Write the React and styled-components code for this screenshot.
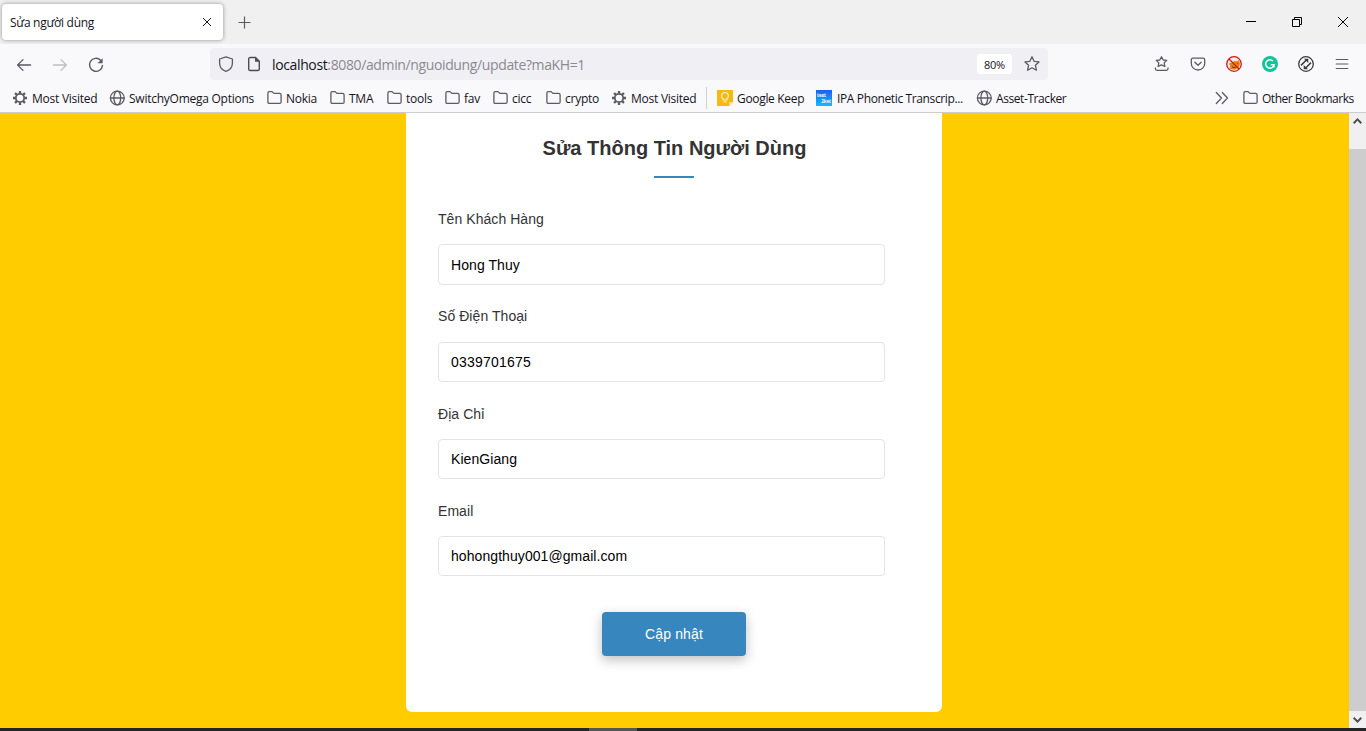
import React from "react";
import styled, { createGlobalStyle } from "styled-components";

const GlobalStyle = createGlobalStyle`
  *, *::before, *::after { box-sizing: border-box; }
  html, body { margin: 0; padding: 0; overflow: hidden; }
  svg { display: block; flex: none; }
`;

const Window = styled.div`
  display: flex;
  flex-direction: column;
  width: 1366px;
  height: 731px;
  overflow: hidden;
  background: #f9f9fb;
  font-family: "Open Sans", "Noto Sans", sans-serif;
  font-size: 12px;
  color: #15141a;
`;

const TabStrip = styled.header`
  display: flex;
  align-items: center;
  height: 44px;
  padding-left: 2px;
  background: #f0f0f0;
`;

const Tab = styled.div`
  display: flex;
  align-items: center;
  justify-content: space-between;
  width: 221px;
  height: 36px;
  padding: 0 11px 0 8px;
  background: #fff;
  border-radius: 4px;
  box-shadow: 0 0 4px rgba(0, 0, 0, 0.4);
`;

const TabTitle = styled.span`
  padding-top: 2px;
  letter-spacing: -0.3px;
  line-height: 16px;
  white-space: nowrap;
`;

const NewTab = styled.div`
  margin-left: 15px;
  padding-top: 1px;
`;

const WindowControls = styled.div`
  display: flex;
  gap: 36px;
  margin-left: auto;
  padding-right: 18px;
`;

const NavBar = styled.nav`
  display: flex;
  align-items: center;
  height: 40px;
  padding: 0 16px;
`;

const NavButtons = styled.div`
  display: flex;
  gap: 20px;
  width: 194px;
  padding-top: 1px;
`;

const AddressBar = styled.div`
  display: flex;
  align-items: center;
  width: 838px;
  height: 32px;
  padding: 0 8px;
  background: #f0eff4;
  border-radius: 4px;
`;

const PageIcon = styled.svg`
  margin-left: 12px;
`;

const Url = styled.div`
  margin-left: 10px;
  padding-top: 2px;
  font-size: 14px;
  letter-spacing: -0.37px;
  line-height: 20px;
  white-space: nowrap;
  color: #8b8a90;
  b { font-weight: 400; color: #15141a; }
`;

const Zoom = styled.div`
  width: 35px;
  height: 20px;
  margin: 0 12px 0 auto;
  border-radius: 3px;
  background: #fff;
  font-size: 11px;
  line-height: 21px;
  letter-spacing: -0.3px;
  text-align: center;
`;

const Extensions = styled.div`
  display: flex;
  gap: 20px;
  margin-left: auto;
`;

const Bookmarks = styled.div`
  display: flex;
  align-items: center;
  gap: 12px;
  height: 29px;
  padding: 0 12px;
  border-bottom: 1px solid #ccc;
`;

const Bookmark = styled.div`
  display: flex;
  align-items: center;
  gap: 4px;
`;

const Text = styled.span`
  width: ${(p) => p.$w}px;
  padding-top: 1px;
  letter-spacing: ${(p) => p.$track ?? -0.25}px;
  line-height: 16px;
  white-space: nowrap;
`;

const Separator = styled.div`
  width: 1px;
  height: 22px;
  margin: 0 -2px 0 -2px;
  background: #cfcfd4;
`;

const Trailing = styled.div`
  display: flex;
  align-items: center;
  gap: 12px;
  margin-left: auto;
`;

const Viewport = styled.div`
  display: flex;
  height: 615px;
`;

const Page = styled.main`
  flex: 1;
  display: flex;
  justify-content: center;
  align-items: flex-start;
  overflow: hidden;
  background: #fc0;
  font-family: "Liberation Sans", Arial, sans-serif;
`;

const Card = styled.form`
  display: flex;
  flex-direction: column;
  width: 536px;
  height: 604px;
  margin: -5px 1px 0 0;
  padding: 26px 32px 0;
  background: #fff;
  border-radius: 6px;
`;

const Title = styled.h1`
  margin: 0;
  padding-left: 1px;
  font-size: 20px;
  line-height: 28px;
  text-align: center;
  white-space: nowrap;
  color: #333;
`;

const Rule = styled.div`
  align-self: center;
  width: 40px;
  height: 2px;
  margin: 14px 0 31px;
  background: #3786bd;
`;

const Field = styled.label`
  display: flex;
  flex-direction: column;
  height: 97.3px;
  font-size: 14px;
  line-height: 20px;
  letter-spacing: 0.06px;
  color: #333;
`;

const Input = styled.input`
  width: 447px;
  height: ${(p) => (p.$tall ? 41 : 40)}px;
  margin-top: ${(p) => (p.$tall ? 15 : 15.4)}px;
  padding: 0 12px;
  border: 1px solid #e4e4e4;
  border-radius: 4px;
  font: 14px "Liberation Sans", Arial, sans-serif;
  letter-spacing: ${(p) => (p.inputMode === "tel" ? 0.22 : 0.07)}px;
  color: #000;
`;

const Submit = styled.button`
  align-self: center;
  width: 144px;
  height: 44px;
  margin-top: 14px;
  border: 0;
  border-radius: 4px;
  background: #3786bd;
  box-shadow: 0 4px 12px rgba(0, 0, 0, 0.25);
  font: 14px "Liberation Sans", Arial, sans-serif;
  letter-spacing: 0.15px;
  color: #fff;
`;

const Scrollbar = styled.div`
  display: flex;
  flex-direction: column;
  width: 17px;
  background: #f0f0f0;
`;

const ScrollArrow = styled.div`
  display: flex;
  align-items: center;
  justify-content: center;
  height: 17px;
  padding-bottom: ${(p) => (p.$up ? 2 : 0)}px;
`;

const Thumb = styled.div`
  height: 562px;
  margin-top: 19px;
  background: #cdcdcd;
`;

const Taskbar = styled.footer`
  display: flex;
  height: 3px;
  background: #242426;
`;

const ActiveTask = styled.div`
  width: 48px;
  margin-left: 589px;
  background: #555;
`;

const Icon = ({ size = 16, color = "#5b5b66", width = 1.3, children }) => (
  <svg width={size} height={size} viewBox="0 0 16 16" fill="none" stroke={color}
    strokeWidth={width} strokeLinecap="round" strokeLinejoin="round">{children}</svg>
);

const Gear = () => (
  <Icon width={1.8}>
    <circle cx="8" cy="8" r="4.2" />
    <path strokeWidth="2.3" strokeLinecap="butt" d="M8 1v2.6M8 12.4V15M1 8h2.6M12.4 8H15M3.05 3.05l1.8 1.8M11.15 11.15l1.8 1.8M3.05 12.95l1.8-1.8M11.15 4.85l1.8-1.8" />
  </Icon>
);

const Globe = () => (
  <Icon width={1.3}>
    <circle cx="8.3" cy="8" r="6.9" />
    <ellipse cx="8.3" cy="8" rx="3.4" ry="6.9" />
    <path d="M1.5 8h13.6" />
  </Icon>
);

const Folder = () => (
  <Icon width={1.3}>
    <path d="M1.9 11.9V3.1Q1.9 1.6 3.4 1.6H6.1L7.9 3.4H13.6Q15.1 3.4 15.1 4.9V11.9Q15.1 13.4 13.6 13.4H3.4Q1.9 13.4 1.9 11.9Z" />
  </Icon>
);

const Keep = () => (
  <svg width="16" height="16" viewBox="0 0 16 16">
    <path d="M0 0h16v12l-4 4H0z" fill="#f5b912" />
    <path d="M12 16v-4h4z" fill="#fbe08a" />
    <path d="M6.2 10V8.8A3.4 3.4 0 1 1 9.8 8.8V10ZM6.4 12h3.2" fill="none" stroke="#fff3cb" strokeWidth="1.2" />
  </svg>
);

const TextSite = styled.div`
  display: flex;
  flex-direction: column;
  width: 16px;
  height: 16px;
  margin-right: 1px;
  padding: 2px 1px;
  background: linear-gradient(#1a62f0, #18b8fb);
  color: #fff;
  font-size: 4.4px;
  font-weight: 700;
  line-height: 6px;
  span:last-child { align-self: flex-end; }
`;

const STAR = "M8 .8L10.1 5.3L15 5.9L11.4 9.2L12.4 14.2L8 11.8L3.6 14.2L4.6 9.2L1 5.9L5.9 5.3Z";

const bookmarks = [
  [Gear, "Most Visited", 65],
  [Globe, "SwitchyOmega Options", 125],
  [Folder, "Nokia", 31],
  [Folder, "TMA", 25],
  [Folder, "tools", 26],
  [Folder, "fav", 16],
  [Folder, "cicc", 21],
  [Folder, "crypto", 34],
  [Gear, "Most Visited", 65],
];

const fields = [
  ["Tên Khách Hàng", "Hong Thuy", "text"],
  ["Số Điện Thoại", "0339701675", "tel"],
  ["Địa Chỉ", "KienGiang", "text"],
  ["Email", "hohongthuy001@gmail.com", "email"],
];

export default function App() {
  return (
    <Window>
      <GlobalStyle />
      <TabStrip>
        <Tab>
          <TabTitle>Sửa người dùng</TabTitle>
          <Icon size={10} color="#15141a" width={1.6}><path d="M2 2l12 12M14 2L2 14" /></Icon>
        </Tab>
        <NewTab>
          <svg width="13" height="13" fill="none" stroke="#5b5b66" strokeWidth="1.2"><path d="M6.5 .5v12M.5 6.5h12" /></svg>
        </NewTab>
        <WindowControls>
          <svg width="10" height="10" stroke="#000"><path d="M0 4.5h10" /></svg>
          <svg width="10" height="10" fill="none" stroke="#000"><path d="M.5 2.5h7v7h-7zM2.5 2.5v-2h7v7h-2" /></svg>
          <svg width="10" height="10" fill="none" stroke="#000"><path d="M0 0l10 10M10 0L0 10" /></svg>
        </WindowControls>
      </TabStrip>
      <NavBar>
        <NavButtons>
          <Icon><path d="M14.6 8H1.6M7 2.6L1.6 8L7 13.4" /></Icon>
          <Icon color="#bdbdc3"><path d="M1.4 8h13M9 2.6L14.4 8L9 13.4" /></Icon>
          <Icon width={1.4}>
            <path d="M12.6 3.2A6.5 6.5 0 1 0 14.5 8.4" />
            <path d="M14.6 1.2V6.3H9.5Z" fill="#5b5b66" stroke="none" />
          </Icon>
        </NavButtons>
        <AddressBar>
          <Icon><path d="M8 .8L14.4 3V7.2C14.4 11 11.6 14 8 15.3C4.4 14 1.6 11 1.6 7.2V3Z" /></Icon>
          <PageIcon width="16" height="16" viewBox="0 0 16 16" fill="none" stroke="#4c4c55" strokeWidth="1.4">
            <path d="M4.2 1.5H9.5L13.3 5.3V13Q13.3 14.5 11.8 14.5H4.2Q2.7 14.5 2.7 13V3Q2.7 1.5 4.2 1.5Z" />
            <path d="M9 1.2L13.6 5.8H9Z" fill="#4c4c55" stroke="none" />
          </PageIcon>
          <Url><b>localhost</b>:8080/admin/nguoidung/update?maKH=1</Url>
          <Zoom>80%</Zoom>
          <Icon><path d={STAR} /></Icon>
        </AddressBar>
        <Extensions>
          <Icon width={1.3}>
            <path d="M7.5 .8L9.2 4L12.7 4.4L10.2 6.9L10.9 10.5L7.5 8.8L4.1 10.5L4.8 6.9L2.3 4.4L5.8 4Z" />
            <path d="M1.4 12v.8Q1.4 14.3 2.9 14.3h9.6Q14 14.3 14 12.8V12" />
          </Icon>
          <Icon>
            <path d="M3 2.2h10q1.7 0 1.7 1.7V7.5A6.6 6.4 0 0 1 1.3 7.5V3.9Q1.3 2.2 3 2.2ZM4.8 6.3L8 9.3L11.2 6.3" />
          </Icon>
          <svg width="16" height="16" viewBox="0 0 16 16">
            <circle cx="8" cy="8" r="7.3" fill="#f9e9df" />
            <path d="M3 7.5L5.8 6.6L9 4.7L11 5.4L13 3.8L14 8L12.6 12L8 13.8L3.5 12.7L4.4 10Z" fill="#e88018" />
            <path d="M6 10.5l2 1.4 2-1M11.2 7.2l1 .6" stroke="#693717" fill="none" />
            <circle cx="8" cy="8" r="7.3" fill="none" stroke="#cf1820" strokeWidth="1.3" />
            <path d="M3 3l10 10" stroke="#cf1820" strokeWidth="1.2" />
          </svg>
          <svg width="16" height="16" viewBox="0 0 16 16" fill="none" stroke="#fff" strokeWidth="1.5">
            <circle cx="8" cy="8" r="8" fill="#15c39a" stroke="none" />
            <path d="M10.9 5A4.2 4.2 0 1 0 12 8.8H8.8M11.9 8.5v3" />
          </svg>
          <svg width="16" height="16" viewBox="0 0 16 16" fill="none" stroke="#3c3c3c" strokeWidth="1.3">
            <circle cx="8" cy="8" r="7.3" />
            <path strokeWidth="1.5" d="M3 9.4L8.6 3.8M7.4 12.2L13 6.6" />
            <path d="M6 2.8H10.3V7.1ZM5.7 8.9V13.2H10Z" fill="#3c3c3c" stroke="none" />
          </svg>
          <Icon width={1.2}><path d="M2.2 3.5h11.6M2.2 8h11.6M2.2 12.5h11.6" /></Icon>
        </Extensions>
      </NavBar>
      <Bookmarks>
        {bookmarks.map(([Mark, name, w], i) => (
          <Bookmark key={i}><Mark /><Text $w={w}>{name}</Text></Bookmark>
        ))}
        <Separator />
        <Bookmark><Keep /><Text $w={67} $track={-0.32}>Google Keep</Text></Bookmark>
        <Bookmark>
          <TextSite><span>text</span><span>2ket</span></TextSite>
          <Text $w={127} $track={-0.37}>IPA Phonetic Transcrip...</Text>
        </Bookmark>
        <Bookmark><Globe /><Text $w={70} $track={-0.42}>Asset-Tracker</Text></Bookmark>
        <Trailing>
          <Icon><path d="M2.3 2.5L7.5 8L2.3 13.5M8.3 2.5L13.5 8L8.3 13.5" /></Icon>
          <Bookmark><Folder /><Text $w={92} $track={-0.48}>Other Bookmarks</Text></Bookmark>
        </Trailing>
      </Bookmarks>
      <Viewport>
        <Page>
          <Card>
            <Title>Sửa Thông Tin Người Dùng</Title>
            <Rule />
            {fields.map(([label, value, mode], i) => (
              <Field key={label}>{label}<Input $tall={i === 0} inputMode={mode} defaultValue={value} /></Field>
            ))}
            <Submit type="button">Cập nhật</Submit>
          </Card>
        </Page>
        <Scrollbar>
          <ScrollArrow $up>
            <svg width="9" height="6" fill="none" stroke="#505050" strokeWidth="2"><path d="M.7 5.2L4.5 1.4L8.3 5.2" /></svg>
          </ScrollArrow>
          <Thumb />
          <ScrollArrow>
            <svg width="9" height="6" fill="none" stroke="#505050" strokeWidth="2"><path d="M.7 .8L4.5 4.6L8.3 .8" /></svg>
          </ScrollArrow>
        </Scrollbar>
      </Viewport>
      <Taskbar><ActiveTask /></Taskbar>
    </Window>
  );
}
